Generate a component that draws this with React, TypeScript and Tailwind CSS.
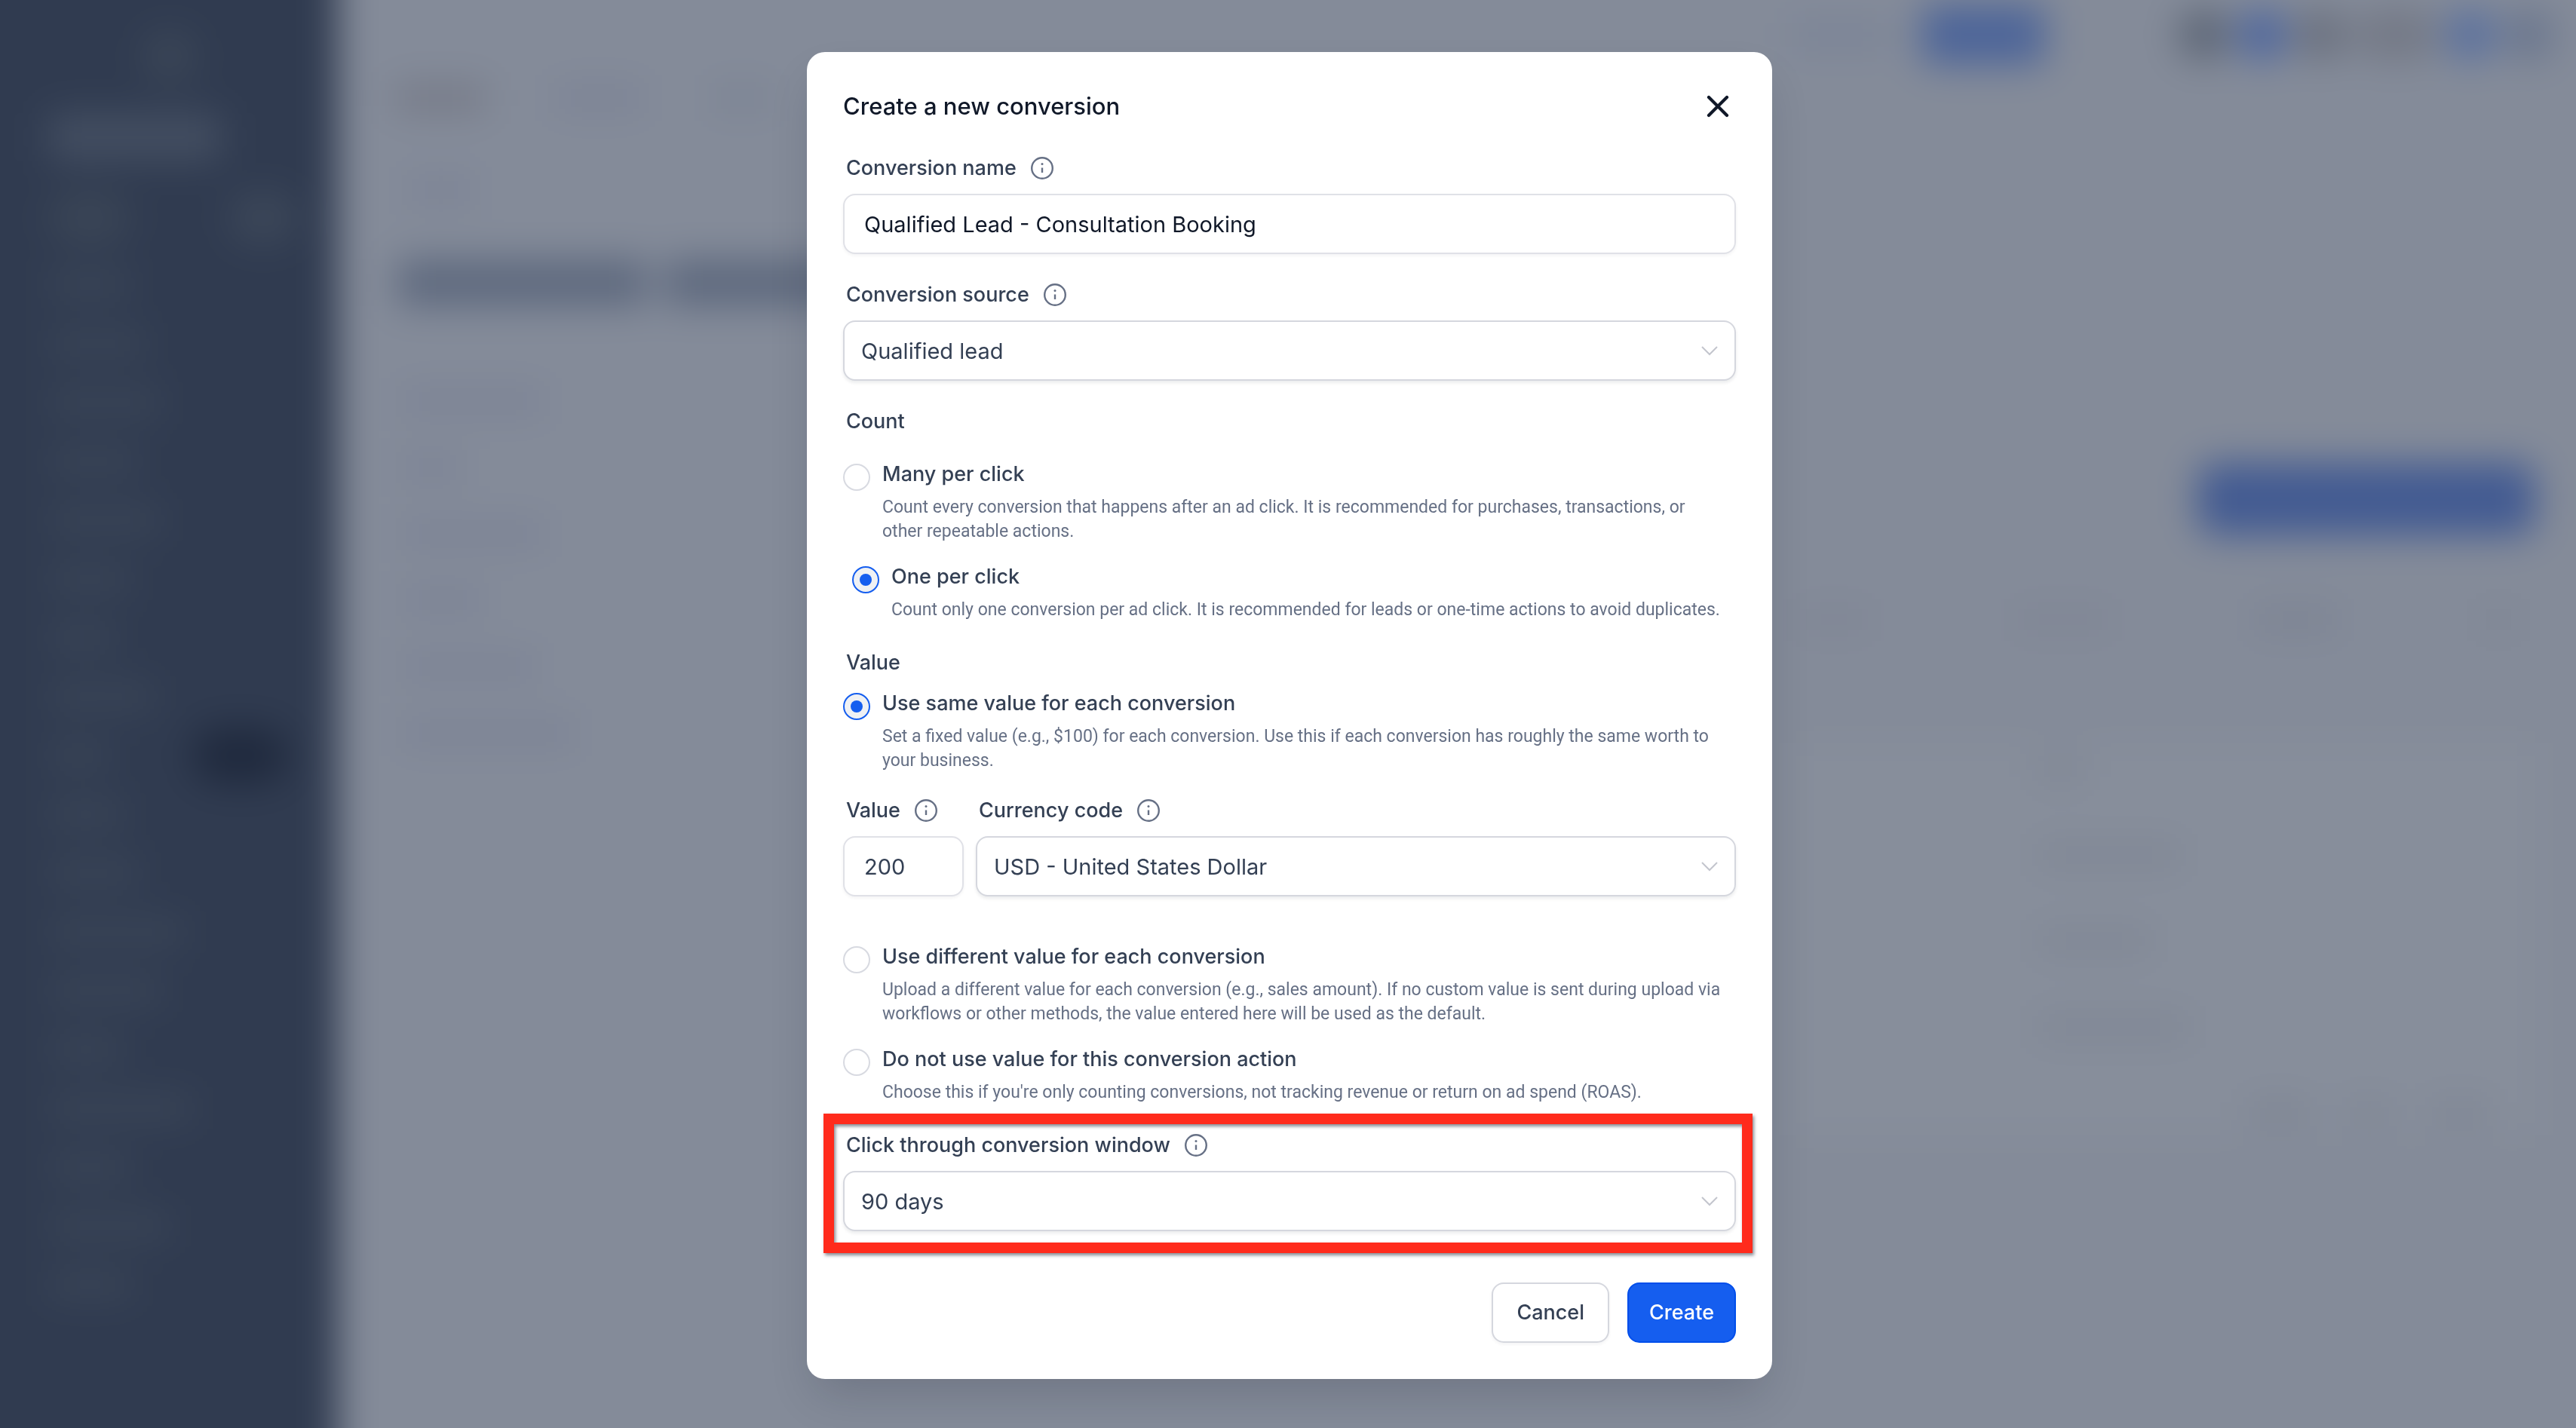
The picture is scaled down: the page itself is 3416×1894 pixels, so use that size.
import { useState } from "react";
import type { ReactNode } from "react";

const sources = ["Qualified lead", "Form submission", "Phone call"];
const currencies = ["USD - United States Dollar", "EUR - Euro", "GBP - British Pound"];
const windows = ["90 days", "60 days", "30 days"];

const sidebarItems = [
  "w-[110px]",
  "w-[130px]",
  "w-[150px]",
  "w-[120px]",
  "w-[150px]",
  "w-[110px]",
  "w-[90px]",
  "w-[140px]",
  "w-[80px]",
  "w-[100px]",
  "w-[120px]",
  "w-[180px]",
  "w-[150px]",
  "w-[100px]",
  "w-[190px]",
  "w-[110px]",
  "w-[160px]",
  "w-[110px]",
];

const menuItems = ["w-[190px]", "w-[80px]", "w-[190px]", "w-[110px]", "w-[180px]", "w-[230px]"];

const textWidths = ["w-[60px]", "w-[190px]", "w-[150px]", "w-[200px]"];

function InfoIcon() {
  return (
    <svg width="32" height="32" viewBox="0 0 32 32" fill="none" aria-hidden className="text-[#667085]">
      <circle cx="16" cy="16" r="13.8" stroke="currentColor" strokeWidth="2.4" />
      <path d="M16 15.5V22" stroke="currentColor" strokeWidth="2.4" />
      <circle cx="16" cy="10.4" r="1.5" fill="currentColor" />
    </svg>
  );
}

function CloseIcon() {
  return (
    <svg width="48" height="48" viewBox="0 0 48 48" fill="none" aria-hidden>
      <path d="M12 12L36 36M36 12L12 36" stroke="currentColor" strokeWidth="4.2" strokeLinecap="round" />
    </svg>
  );
}

function FieldLabel({ id, info, children }: { id: string; info?: boolean; children: ReactNode }) {
  return (
    <div className="flex h-10 items-center gap-[18px] pl-1">
      <label htmlFor={id} className="text-[27px] leading-10 font-medium whitespace-nowrap text-[#344054]">
        {children}
      </label>
      {info && <InfoIcon />}
    </div>
  );
}

function Select({ id, options }: { id: string; options: string[] }) {
  return (
    <div className="relative">
      <select
        id={id}
        className="h-20 w-full appearance-none rounded-2xl border-2 border-[#d5d7de] bg-white pt-[2px] pr-16 pl-[22px] text-[29px] text-[#344054] shadow-[0_3px_4px_rgba(16,24,40,0.08)]"
      >
        {options.map((option) => (
          <option key={option}>{option}</option>
        ))}
      </select>
      <svg
        width="24"
        height="16"
        viewBox="0 0 24 16"
        fill="none"
        aria-hidden
        className="pointer-events-none absolute inset-y-0 right-[23px] my-auto text-[#c3c5cd]"
      >
        <path d="M2 3L12 13L22 3" stroke="currentColor" strokeWidth="2" />
      </svg>
    </div>
  );
}

type OptionProps = {
  id: string;
  name: string;
  title: string;
  checked: boolean;
  onSelect: (id: string) => void;
  children: ReactNode;
};

function RadioOption({ id, name, title, checked, onSelect, children }: OptionProps) {
  return (
    <div className="flex items-start gap-4">
      <input
        type="radio"
        id={id}
        name={name}
        checked={checked}
        onChange={() => onSelect(id)}
        className="mt-1.5 grid size-9 shrink-0 appearance-none place-items-center rounded-full border-2 border-[#d8dae1] bg-white checked:border-[#155eef] checked:bg-[#eff1f4] checked:before:size-4 checked:before:rounded-full checked:before:bg-[#155eef] checked:before:content-['']"
      />
      <div className="space-y-2">
        <label htmlFor={id} className="block text-[27px] leading-10 font-medium text-[#344054]">
          {title}
        </label>
        <p className="pr-4 font-[Roboto,'Liberation_Sans',sans-serif] text-[23px] leading-8 text-[#667085]">
          {children}
        </p>
      </div>
    </div>
  );
}

// The app behind the dialog, dimmed and out of focus. It bleeds 80px past the
// window on every side so the blur does not fade out at the edges.
function Backdrop() {
  return (
    <div aria-hidden className="fixed -inset-20 flex overflow-hidden bg-[#848b99] blur-[25px]">
      <aside className="w-[528px] shrink-0 bg-[#303b50] pt-20 pl-36">
        <div className="ml-[125px] h-[150px] w-[72px] pt-10">
          <div className="h-[70px] rounded-full bg-[#3b4657]" />
        </div>
        <div className="h-[64px] w-[230px] rounded-lg bg-[#434e61]" />
        <div className="mt-10 flex h-[70px] w-[330px] justify-between">
          <div className="w-[110px] rounded-full bg-[#3a4556]" />
          <div className="w-[90px] rounded-full bg-[#3c4759]" />
        </div>
        <div className="mt-10 flex flex-col gap-[50px]">
          {sidebarItems.map((width, i) => (
            <div key={i} className="flex h-7 items-center">
              <div className={`h-7 rounded bg-[#3d4859] ${width}`} />
              {i === 8 && <div className="ml-[110px] h-[76px] w-[130px] shrink-0 rounded-full bg-[#202a3e]" />}
            </div>
          ))}
        </div>
      </aside>
      <div className="flex-1 pt-20 pr-20">
        <div className="flex h-[92px] items-center justify-end gap-[10px] pr-7">
          <div className="mr-8 h-10 w-[130px] rounded bg-[#7b8497]" />
          <div className="mr-[166px] h-[80px] w-[164px] rounded-xl bg-[#4d6599]" />
          <div className="size-[68px] rounded-full bg-[#5c6575]" />
          <div className="size-[68px] rounded-full bg-[#4c659e]" />
          <div className="size-[68px] rounded-full bg-[#6a707e]" />
          <div className="h-[68px] w-[110px] rounded-full bg-[#747986]" />
          <div className="size-[68px] rounded-full bg-[#586f9f]" />
          <div className="size-[68px] rounded-full bg-[#6a768e]" />
        </div>
        <div className="flex items-center gap-[90px] pt-5 pl-[76px]">
          <div className="h-9 w-[120px] bg-[#757986]" />
          <div className="h-8 w-[120px] bg-[#7b8295]" />
          <div className="h-8 w-[80px] bg-[#7b8393]" />
        </div>
        <div className="mt-[88px] ml-[92px] h-8 w-[90px] bg-[#7b8295]" />
        <div className="mt-[76px] ml-[80px] flex gap-6">
          <div className="h-[62px] w-[330px] bg-[#5e697e]" />
          <div className="h-[62px] w-[290px] bg-[#5e697e]" />
        </div>
        <div className="mt-[110px] flex items-start justify-between pr-[54px] pl-[84px]">
          <div className="flex flex-col gap-[56px]">
            {menuItems.map((width, i) => (
              <div key={i} className={`h-8 bg-[#7b8295] ${width}`} />
            ))}
          </div>
          <div className="mt-[98px] w-[980px]">
            <div className="ml-auto h-[96px] w-[448px] rounded-3xl bg-[#435b92]" />
            <div className="mt-[98px] flex justify-between pr-6">
              <div className="h-7 w-[100px] bg-[#7f8594]" />
              <div className="h-7 w-[130px] bg-[#7f8594]" />
              <div className="h-7 w-[110px] bg-[#7b8292]" />
              <div className="h-7 w-[50px] bg-[#7e8593]" />
            </div>
            <div className="mt-[150px] h-[520px] bg-[#878e9b] pt-5 pl-[320px]">
              <div className="flex flex-col gap-[86px]">
                {textWidths.map((width) => (
                  <div key={width} className={`h-7 bg-[#7e8593] ${width}`} />
                ))}
              </div>
              <div className="mt-[84px] flex gap-[50px] pl-[280px]">
                <div className="h-8 w-[80px] bg-[#7e8593]" />
                <div className="h-8 w-[60px] bg-[#7f8694]" />
                <div className="h-8 w-[80px] bg-[#7f8694]" />
              </div>
            </div>
          </div>
        </div>
      </div>
    </div>
  );
}

export default function App() {
  const [count, setCount] = useState("one-per-click");
  const [valueMode, setValueMode] = useState("same-value");

  return (
    <div className="min-h-screen bg-[#848b99] font-[Inter,'Liberation_Sans',sans-serif]">
      <Backdrop />
      <div className="fixed inset-0 overflow-y-auto pt-[69px] pl-1">
        <section
          role="dialog"
          aria-labelledby="dialog-title"
          className="mx-auto w-full max-w-[1280px] rounded-[24px] bg-white p-12 shadow-[0_30px_60px_-12px_rgba(16,24,40,0.18)]"
        >
          <header className="flex h-12 items-center justify-between">
            <h2 id="dialog-title" className="text-[31px] leading-[48px] font-medium text-[#101828]">
              Create a new conversion
            </h2>
            <button type="button" aria-label="Close" className="text-[#101828]">
              <CloseIcon />
            </button>
          </header>

          <form className="mt-[38px]" onSubmit={(e) => e.preventDefault()}>
            <div className="space-y-[34px]">
              <div className="space-y-[14px]">
                <FieldLabel id="name" info>
                  Conversion name
                </FieldLabel>
                <input
                  id="name"
                  type="text"
                  defaultValue="Qualified Lead - Consultation Booking"
                  className="block h-20 w-full rounded-2xl border-2 border-[#e0e1e7] bg-white px-[26px] text-[29px] text-[#101828] shadow-[0_2px_4px_rgba(16,24,40,0.05)]"
                />
              </div>

              <div className="space-y-[14px]">
                <FieldLabel id="source" info>
                  Conversion source
                </FieldLabel>
                <Select id="source" options={sources} />
              </div>

              <fieldset>
                <legend className="pl-1 text-[27px] leading-10 font-medium text-[#344054]">Count</legend>
                <div className="space-y-6 pt-[30px]">
                  <RadioOption
                    id="many-per-click"
                    name="count"
                    title="Many per click"
                    checked={count === "many-per-click"}
                    onSelect={setCount}
                  >
                    Count every conversion that happens after an ad click. It is recommended for purchases,
                    transactions, or other repeatable actions.
                  </RadioOption>
                  <div className="pl-3">
                    <RadioOption
                      id="one-per-click"
                      name="count"
                      title="One per click"
                      checked={count === "one-per-click"}
                      onSelect={setCount}
                    >
                      Count only one conversion per ad click. It is recommended for leads or one-time actions to avoid
                      duplicates.
                    </RadioOption>
                  </div>
                </div>
              </fieldset>

              <fieldset>
                <legend className="pl-1 text-[27px] leading-10 font-medium text-[#344054]">Value</legend>
                <div className="pt-[14px]">
                  <RadioOption
                    id="same-value"
                    name="value-mode"
                    title="Use same value for each conversion"
                    checked={valueMode === "same-value"}
                    onSelect={setValueMode}
                  >
                    Set a fixed value (e.g., $100) for each conversion. Use this if each conversion has roughly the same
                    worth to your business.
                  </RadioOption>
                </div>

                <div className="mt-[30px] flex gap-4">
                  <div className="w-40 space-y-[14px]">
                    <FieldLabel id="value" info>
                      Value
                    </FieldLabel>
                    <input
                      id="value"
                      type="text"
                      inputMode="numeric"
                      defaultValue="200"
                      className="block h-20 w-full rounded-2xl border-2 border-[#e0e1e7] bg-white px-[26px] text-[29px] text-[#344054] shadow-[0_2px_4px_rgba(16,24,40,0.05)]"
                    />
                  </div>
                  <div className="flex-1 space-y-[14px]">
                    <FieldLabel id="currency" info>
                      Currency code
                    </FieldLabel>
                    <Select id="currency" options={currencies} />
                  </div>
                </div>

                <div className="mt-[60px] space-y-6">
                  <RadioOption
                    id="different-value"
                    name="value-mode"
                    title="Use different value for each conversion"
                    checked={valueMode === "different-value"}
                    onSelect={setValueMode}
                  >
                    Upload a different value for each conversion (e.g., sales amount). If no custom value is sent during
                    upload via workflows or other methods, the value entered here will be used as the default.
                  </RadioOption>
                  <RadioOption
                    id="no-value"
                    name="value-mode"
                    title="Do not use value for this conversion action"
                    checked={valueMode === "no-value"}
                    onSelect={setValueMode}
                  >
                    Choose this if you're only counting conversions, not tracking revenue or return on ad spend (ROAS).
                  </RadioOption>
                </div>
              </fieldset>

              <div className="relative space-y-[14px]">
                <FieldLabel id="window" info>
                  Click through conversion window
                </FieldLabel>
                <Select id="window" options={windows} />
                {/* highlight frame around the field */}
                <div className="pointer-events-none absolute -top-[22px] -right-[22px] -bottom-[29px] -left-[26px] border-[14px] border-[#ff2b1c] drop-shadow-[2px_3px_2px_rgba(16,24,40,0.5)]" />
              </div>
            </div>

            <div className="mt-[68px] flex justify-end gap-6">
              <button
                type="button"
                className="h-20 rounded-2xl border-2 border-[#d5d7de] bg-white px-[31px] text-[27px] font-medium text-[#344054] shadow-[0_2px_4px_rgba(16,24,40,0.05)]"
              >
                Cancel
              </button>
              <button
                type="submit"
                className="h-20 rounded-2xl border-2 border-[#004eeb] bg-[#155eef] px-[27px] text-[27px] font-medium text-white"
              >
                Create
              </button>
            </div>
          </form>
        </section>
      </div>
    </div>
  );
}
